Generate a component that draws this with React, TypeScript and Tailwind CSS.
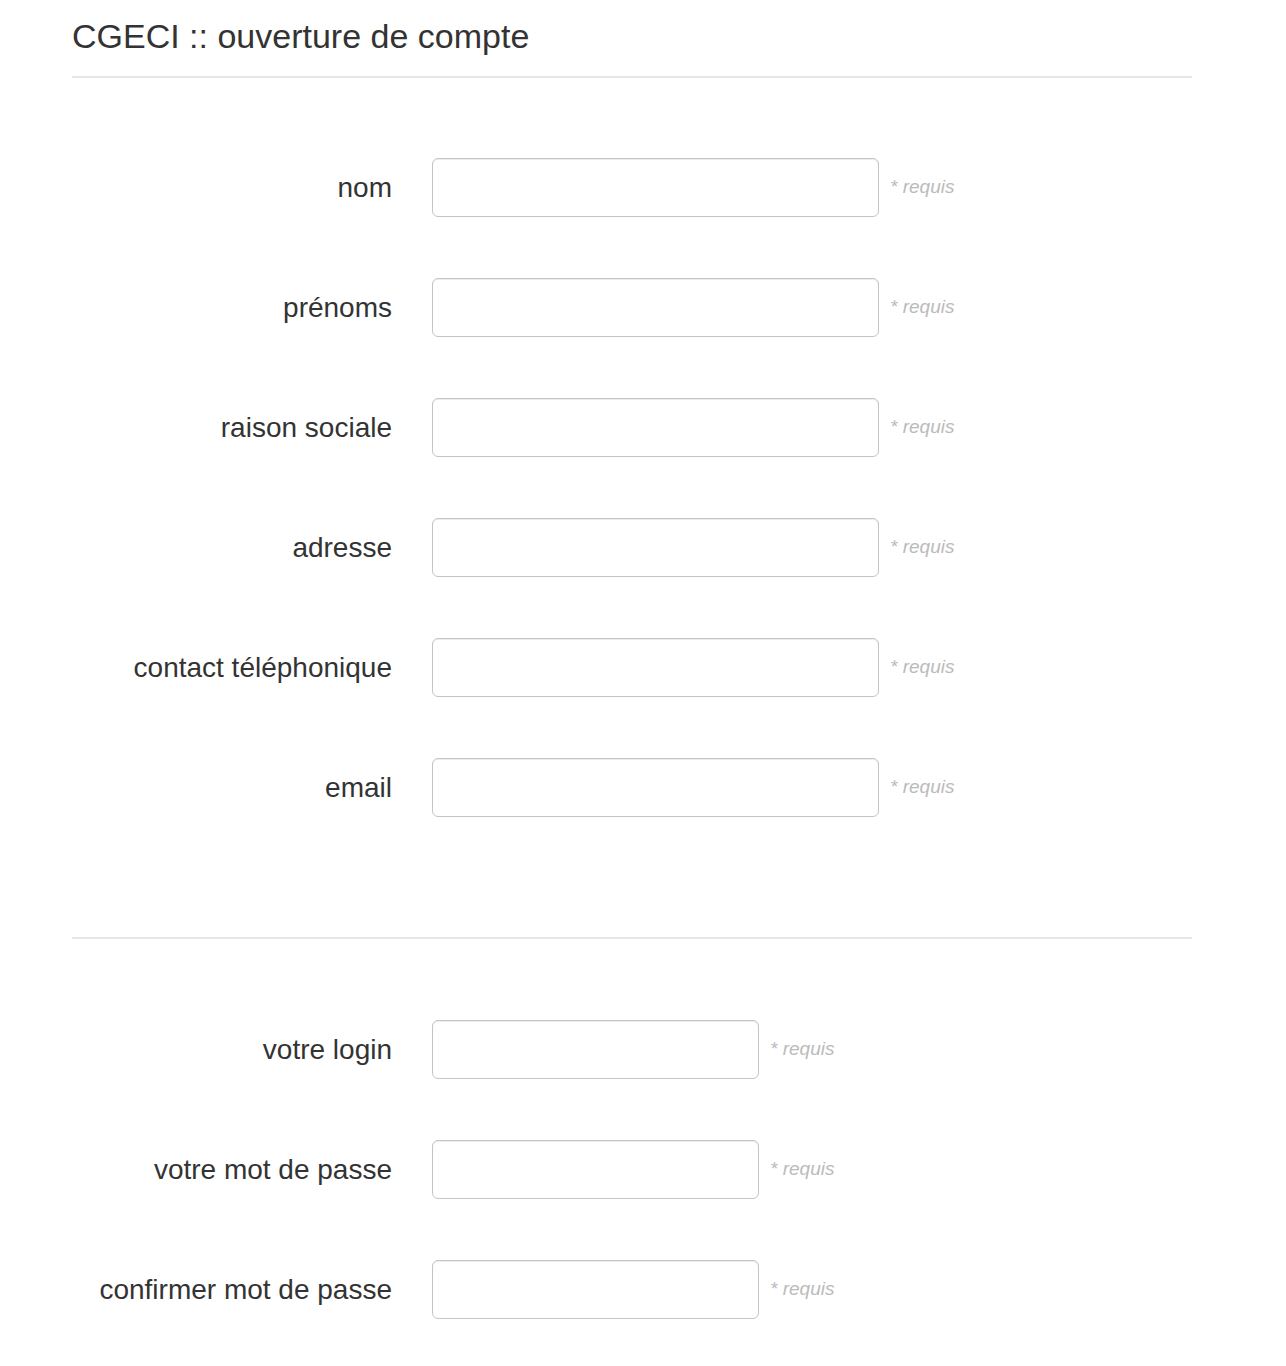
import React from 'react';

const font = { fontFamily: '"Liberation Sans", Arial, sans-serif' };

const compte = ['nom', 'prénoms', 'raison sociale', 'adresse', 'contact téléphonique', 'email'];
const acces = ['votre login', 'votre mot de passe', 'confirmer mot de passe'];

function Field({ label, wide }: { label: string; wide: boolean }) {
  return (
    <div className="flex items-center h-[60px]">
      <label className="w-[320px] shrink-0 mt-[2px] text-right text-[28px] text-[#333]">{label}</label>
      <input
        type="text"
        className={`ml-[40px] h-[59px] rounded-[6px] border border-[#c4c4c4] bg-white shadow-[inset_0_1px_1px_rgba(0,0,0,0.075)] outline-none ${
          wide ? 'w-[447px]' : 'w-[327px]'
        }`}
      />
      <span className="ml-[11px] text-[19px] italic text-[#bbb]">* requis</span>
    </div>
  );
}

export default function App() {
  return (
    <div className="min-h-[1366px] bg-white" style={font}>
      <div className="px-[72px] w-[1264px]">
        <div className="pt-[17px] pb-[21px] border-b-2 border-[#e6e6e6]">
          <h1 className="text-[34px] leading-[38px] text-[#333]">CGECI :: ouverture de compte</h1>
        </div>

        <div className="pt-[79px] pb-[120px] flex flex-col gap-[60px] border-b-2 border-[#e6e6e6]">
          {compte.map((l) => (
            <Field key={l} label={l} wide />
          ))}
        </div>

        <div className="pt-[80px] flex flex-col gap-[60px]">
          {acces.map((l) => (
            <Field key={l} label={l} wide={false} />
          ))}
        </div>
      </div>
    </div>
  );
}
